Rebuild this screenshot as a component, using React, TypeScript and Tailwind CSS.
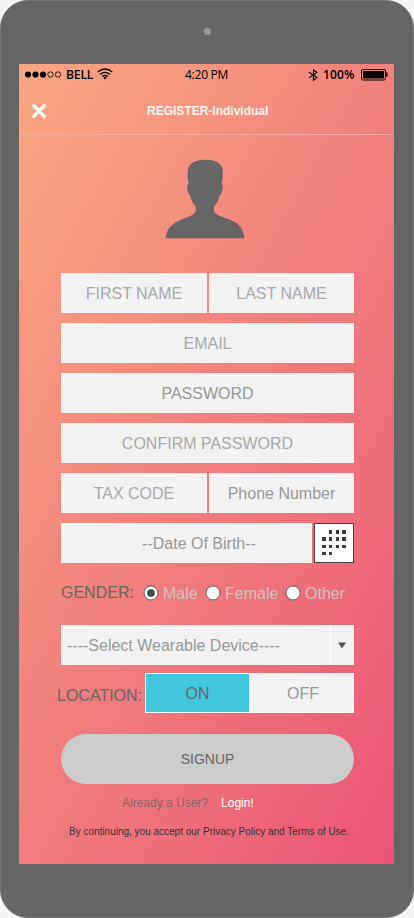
import type { ReactNode } from 'react';

function Field({ label, className = '' }: { label: string; className?: string }) {
  return (
    <div className={`flex h-10 items-center justify-center whitespace-nowrap bg-[#f2f2f2] pt-[2px] text-base ${className}`}>
      {label}
    </div>
  );
}

function StatusBar() {
  return (
    <div className="flex h-[21px] shrink-0 items-center pl-[6px] font-['Open_Sans','Noto_Sans',sans-serif] text-[12px] text-black">
      <svg width="37" height="9" viewBox="0 0 37 9" className="mt-[-1px] shrink-0">
        <circle cx="3" cy="4.5" r="3.1" />
        <circle cx="10.5" cy="4.5" r="3.1" />
        <circle cx="18" cy="4.5" r="3.1" />
        <circle cx="25.5" cy="4.5" r="2.7" fill="none" stroke="black" strokeWidth="0.8" />
        <circle cx="33" cy="4.5" r="2.7" fill="none" stroke="black" strokeWidth="0.8" />
      </svg>
      <span className="ml-[4px] w-[29px] whitespace-nowrap font-semibold leading-4 tracking-[-0.1px]">BELL</span>
      <svg width="16" height="12" viewBox="0 0 16 12" className="ml-[2px] mt-[-2px] shrink-0" fill="none" stroke="black" strokeWidth="1.25">
        <path d="M.7 4.1Q8-2.1 15.3 4.1M3 6.4Q8 2.2 13 6.4M5.2 8.6Q8 6.4 10.8 8.6" />
        <path d="M6.3 9.7Q8 8.5 9.7 9.7L8 11.4Z" fill="black" stroke="none" />
      </svg>
      <span className="ml-[72px] w-[44px] whitespace-nowrap leading-4 tracking-[-0.25px]">4:20 PM</span>
      <svg width="11" height="12" viewBox="0 0 11 12" className="ml-[79px] mt-px shrink-0" fill="none" stroke="black" strokeWidth="1.1">
        <path d="M1 3.2L9 8.6L5.5 11.2V.9L9 3.5L1 8.9" />
      </svg>
      <span className="ml-[4px] w-[33px] whitespace-nowrap pt-px font-semibold leading-4 tracking-[0.15px]">100%</span>
      <svg width="28" height="12" viewBox="0 0 28 12" className="ml-[5px] shrink-0">
        <rect x=".5" y=".5" width="24" height="10.5" rx="1.5" fill="none" stroke="black" />
        <rect x="2" y="2" width="21" height="7.5" />
        <path d="M25 3.5h1.5v4H25z" />
      </svg>
    </div>
  );
}

function Radio({ checked = false, children, className }: { checked?: boolean; children: ReactNode; className: string }) {
  return (
    <div className={`flex items-center ${className}`}>
      <svg width="16" height="16" viewBox="0 0 16 16" className="mt-[-1px] shrink-0">
        <circle cx="8" cy="8" r="7" fill="white" stroke="#6b5a5a" />
        {checked && <circle cx="8" cy="8" r="3.8" fill="#444" />}
      </svg>
      <span className="ml-[4px] pt-[2px] text-[#d0c2c2]">{children}</span>
    </div>
  );
}

const calendarDots = [
  [1, 0], [2, 0], [3, 0],
  [0, 1], [1, 1], [2, 1], [3, 1],
  [0, 2], [1, 2], [2, 2], [3, 2],
  [0, 3], [1, 3],
];
const dotX = [8, 15, 22, 28];
const dotY = [7, 14, 22, 29];

export default function App() {
  return (
    <div className="h-[918px] w-[414px] overflow-hidden bg-[#f5f5f5] font-['Liberation_Sans',Arial,sans-serif]">
      <div className="flex h-[918px] w-[414px] flex-col rounded-[28px] border border-[#777] bg-[#666] pl-[18px]">
        <div className="flex h-[63px] shrink-0 justify-center pr-[18px] pt-[27px]">
          <div className="h-[7px] w-[7px] rounded-full bg-[#999]" />
        </div>
        <div className="flex h-[800px] w-[375px] shrink-0 flex-col bg-[linear-gradient(119deg,#faa682_0%,#f6967f_23%,#f1807d_48%,#ee6d79_72%,#eb5376_100%)]">
          <StatusBar />
          <div className="mr-px flex h-[50px] shrink-0 items-center border-b border-[#f8aaa5]">
            <svg width="16" height="16" viewBox="0 0 16 16" className="ml-[12px] mt-[3px] shrink-0">
              <path d="M2.7 2.7L13.3 13.3M13.3 2.7L2.7 13.3" stroke="white" strokeWidth="3.2" strokeLinecap="round" />
            </svg>
            <h1 className="ml-[100px] whitespace-nowrap pt-[2px] text-[12px] font-bold leading-4 text-[#fff5f2]">REGISTER-Individual</h1>
          </div>
          <svg width="80" height="80" viewBox="0 0 80 80" className="ml-[146px] mt-[24px] shrink-0">
            <path fill="#666" d="M40 .7C30 1 23.3 4.5 22.7 12Q22.2 20 23.8 25C21.5 25 22 28 22.7 32C23.5 35.5 24.8 35.5 25.3 37C26.2 42 28.5 45 30.7 47.5V52C29 57 22 58 14.5 61.5C5.5 65.5 1.5 71 .5 79.3H79.5C78.5 71 75 64.5 66 61.2C58 58 50.5 56.5 49 52V47.5C51.5 45 53.5 41.5 54.3 37C56.2 36 57.7 31 57.7 27.5C57.8 25.7 57.3 25 56.5 25Q58.4 17 57.7 11C57 3.5 49 .5 40 .7Z" />
          </svg>
          <div className="ml-[42px] mt-[34px] flex w-[293px] flex-col gap-[10px] text-[#999]">
            <div className="flex gap-[2px]">
              <Field label="FIRST NAME" className="w-[146px] text-[#a9a9a9]" />
              <Field label="LAST NAME" className="w-[145px] text-[#a9a9a9]" />
            </div>
            <Field label="EMAIL" className="text-[#a9a9a9]" />
            <Field label="PASSWORD" className="text-[#999]" />
            <Field label="CONFIRM PASSWORD" className="text-[#a9a9a9]" />
            <div className="flex gap-[2px]">
              <Field label="TAX CODE" className="w-[146px] text-[#a9a9a9]" />
              <Field label="Phone Number" className="w-[145px] text-[#999]" />
            </div>
            <div className="flex gap-[2px]">
              <Field label="--Date Of Birth--" className="w-[251px] pl-[25px] text-[#999]" />
              <svg width="40" height="40" viewBox="0 0 40 40">
                <rect x=".5" y=".5" width="39" height="39" fill="white" stroke="#4b4040" />
                {calendarDots.map(([column, row]) => (
                  <rect key={`${column}-${row}`} x={dotX[column]} y={dotY[row]} width={column === 0 || column === 3 ? 4 : 3} height={row === 0 || row === 1 ? 4 : 3} fill="#3c3c3c" />
                ))}
              </svg>
            </div>
          </div>
          <div className="ml-[42px] mt-[21px] flex h-[18px] items-center whitespace-nowrap text-base leading-[18px]">
            <span className="w-[82px] text-[#666]">GENDER:</span>
            <Radio checked className="w-[62px]">Male</Radio>
            <Radio className="w-[80px]">Female</Radio>
            <Radio className="w-[64px]">Other</Radio>
          </div>
          <div className="ml-[42px] mt-[23px] flex h-10 w-[293px] shrink-0 items-center bg-[#f2f2f2] text-base text-[#999]">
            <span className="flex h-10 w-[270px] items-center whitespace-nowrap border-r border-white pl-[6px] pt-[2px]">----Select Wearable Device----</span>
            <svg width="8" height="7" viewBox="0 0 8 7" className="ml-[7px]"><path d="M0 .5H8L4 6.5Z" fill="#555" /></svg>
          </div>
          <div className="ml-[38px] mt-[8px] flex h-10 shrink-0 items-center text-base">
            <span className="w-[88px] whitespace-nowrap pt-[6px] text-[#666]">LOCATION:</span>
            <div className="flex h-10 w-[209px] border border-white bg-[#f2f2f2]">
              <div className="flex w-[103px] items-center justify-center bg-[#41c6db] pt-[2px] text-[#666]">ON</div>
              <div className="flex flex-1 items-center justify-center pl-[4px] pt-[2px] text-[#999]">OFF</div>
            </div>
          </div>
          <button className="ml-[42px] mt-[21px] h-[50px] w-[293px] shrink-0 rounded-full bg-[#ccc] text-[14px] text-[#666]">SIGNUP</button>
          <div className="ml-[103px] mt-[11px] flex h-4 items-center gap-[13px] whitespace-nowrap text-[12px] leading-4">
            <span className="text-[#80686a]">Already a User?</span>
            <span className="text-white">Login!</span>
          </div>
          <div className="ml-[50px] mt-[15px] whitespace-nowrap text-[10px] leading-3 text-[#333]">By continuing, you accept our Privacy Policy and Terms of Use.</div>
        </div>
      </div>
    </div>
  );
}
